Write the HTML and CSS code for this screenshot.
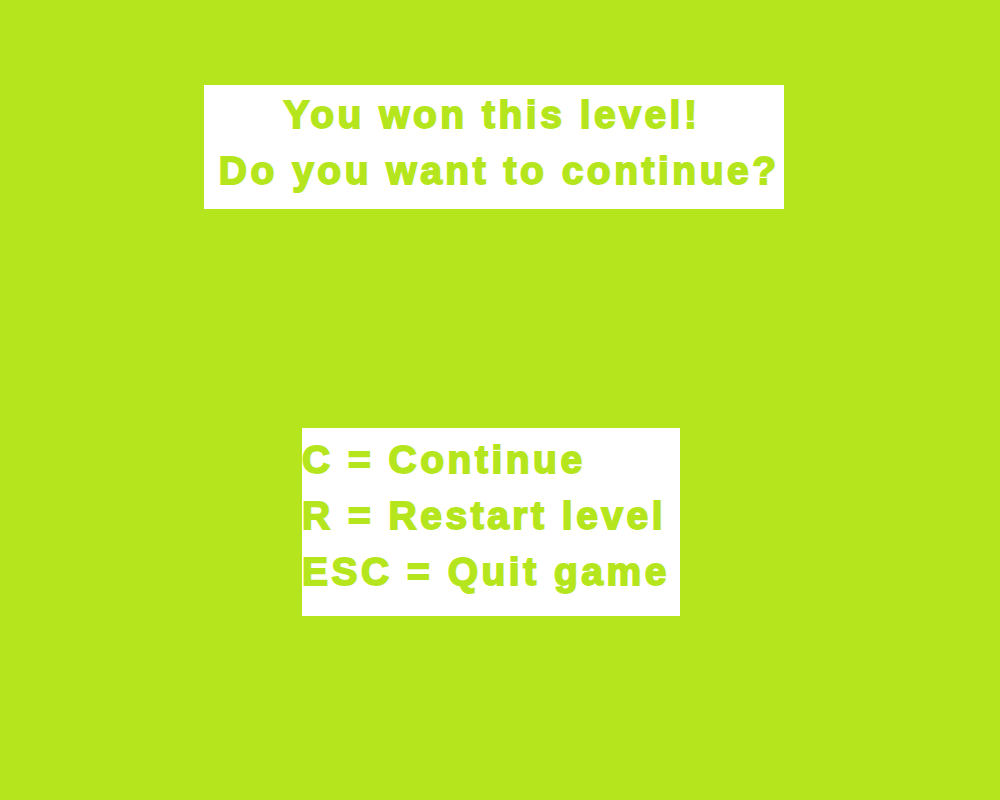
FILE: index.html
```html
<!DOCTYPE html>
<html>
<head>
<meta charset="utf-8">
<link rel="stylesheet" href="styles.css">
</head>
<body>
<div class="screen">
  <div class="banner">
    <div class="line">You won this level!</div>
    <div class="line"> Do you want to continue?</div>
  </div>
  <div class="menu">
    <div class="line">C = Continue</div>
    <div class="line">R = Restart level</div>
    <div class="line">ESC = Quit game</div>
  </div>
</div>
</body>
</html>
```

FILE: styles.css
```css
html, body {
  margin: 0;
  padding: 0;
  background: #b5e61d;
}
.screen {
  width: 1000px;
  height: 800px;
  display: flex;
  flex-direction: column;
  font-family: "Liberation Sans", Arial, sans-serif;
  font-weight: bold;
  font-size: 39px;
  color: #b5e61d;
}
.line {
  line-height: 56px;
  letter-spacing: 3.5px;
  white-space: pre;
  -webkit-text-stroke: 1.8px #b5e61d;
}
.banner {
  margin: 85px 0 0 204px;
  width: 580px;
  height: 124px;
  box-sizing: border-box;
  padding: 2px 4px 0 0;
  background: #fff;
  text-align: center;
}
.menu {
  margin: 219px 0 0 302px;
  width: 378px;
  height: 188px;
  box-sizing: border-box;
  padding: 4px 0 0 0;
  background: #fff;
}
```
